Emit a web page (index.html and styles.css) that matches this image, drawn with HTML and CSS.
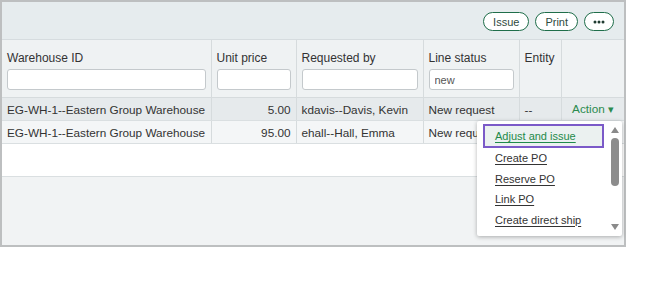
FILE: index.html
```html
<!DOCTYPE html>
<html>
<head>
  <meta charset="utf-8">
  <title>Requests</title>
<link rel="stylesheet" href="styles.css">
</head>
<body>
  <div class="frame">
    <div class="toolbar">
      <button class="pill">Issue</button>
      <button class="pill">Print</button>
      <button class="pill more" aria-label="More">
        <svg width="12" height="4" viewBox="0 0 12 4"><circle cx="2" cy="2" r="1.5"/><circle cx="6" cy="2" r="1.5"/><circle cx="10" cy="2" r="1.5"/></svg>
      </button>
    </div>
    <table class="grid">
      <colgroup>
        <col class="c-wh"><col class="c-price"><col class="c-req"><col class="c-status"><col class="c-entity"><col class="c-act">
      </colgroup>
      <thead>
        <tr>
          <th><div class="label">Warehouse ID</div><input class="filter"></th>
          <th><div class="label">Unit price</div><input class="filter"></th>
          <th><div class="label">Requested by</div><input class="filter"></th>
          <th><div class="label">Line status</div><input class="filter" value="new"></th>
          <th><div class="label">Entity</div></th>
          <th></th>
        </tr>
      </thead>
      <tbody>
        <tr class="sel">
          <td>EG-WH-1--Eastern Group Warehouse</td>
          <td class="num">5.00</td>
          <td>kdavis--Davis, Kevin</td>
          <td>New request</td>
          <td>--</td>
          <td class="act">Action <span class="caret">&#9662;</span></td>
        </tr>
        <tr>
          <td>EG-WH-1--Eastern Group Warehouse</td>
          <td class="num">95.00</td>
          <td>ehall--Hall, Emma</td>
          <td>New request</td>
          <td></td>
          <td></td>
        </tr>
      </tbody>
    </table>
    <div class="empty"></div>
    <div class="footer"></div>

    <div class="menu">
      <ul class="items">
        <li class="focus"><a href="#">Adjust and issue</a></li>
        <li><a href="#">Create PO</a></li>
        <li><a href="#">Reserve PO</a></li>
        <li><a href="#">Link PO</a></li>
        <li><a href="#">Create direct ship</a></li>
        <li><a href="#">Drop ship</a></li>
      </ul>
      <div class="scroll">
        <span class="arrow up"></span>
        <span class="thumb"></span>
        <span class="arrow down"></span>
      </div>
    </div>
  </div>
</body>
</html>
```

FILE: styles.css
```css
body {
  margin: 0;
  background: #fff;
  font-family: "Liberation Sans", Arial, sans-serif;
  font-size: 11.75px;
  color: #333;
}

.frame {
  position: relative;
  width: 622px;
  height: 243px;
  border: 2px solid #bdbfc0;
  display: flex;
  flex-direction: column;
  background: #f1f3f4;
}

.toolbar {
  height: 38px;
  flex: none;
  display: flex;
  justify-content: flex-end;
  align-items: center;
  gap: 6px;
  padding: 2px 10px 0 0;
  background: #e6ecee;
  border-bottom: 1px solid #d6dcdf;
  box-sizing: border-box;
}

.pill {
  height: 19px;
  padding: 0 9px;
  border: 1.5px solid #1f6e4a;
  border-radius: 10px;
  background: #fff;
  font-family: inherit;
  font-size: 11px;
  color: #2f4a40;
}

.more {
  width: 30px;
  padding: 0;
  display: flex;
  align-items: center;
  justify-content: center;
}

.more svg { fill: #1f3b30; }

.grid {
  border-collapse: collapse;
  table-layout: fixed;
  width: 622px;
  flex: none;
}

.c-wh { width: 209px; }
.c-price { width: 85px; }
.c-req { width: 127px; }
.c-status { width: 96px; }
.c-entity { width: 42px; }
.c-act { width: 63px; }

th {
  height: 57px;
  padding: 0 5px;
  text-align: left;
  vertical-align: top;
  font-weight: normal;
  font-size: 12px;
  background: #eff2f3;
  border-right: 1px solid #d6dbdd;
}

th:last-child { border-right: none; }

.label {
  margin-top: 11px;
  height: 18px;
  color: #333;
}

.filter {
  display: block;
  box-sizing: border-box;
  width: 100%;
  height: 21px;
  margin: 0;
  padding: 0 5px;
  border: 1px solid #c4c9cc;
  border-radius: 3px;
  background: #fff;
  font-family: inherit;
  font-size: 11px;
  color: #555;
}

td {
  height: 22px;
  padding: 0 5px;
  border-right: 1px solid #d6dbdd;
  border-bottom: 1px solid #dadfe1;
  white-space: nowrap;
  overflow: hidden;
  background: #f4f6f7;
}

td:last-child { border-right: none; }

tr.sel td { background: #e6eaec; border-top: 1px solid #d6dbdd; }

.num { text-align: right; }

.act {
  text-align: right;
  color: #2b8a4e;
  padding-right: 10px;
}

.caret { font-size: 11px; }

.empty {
  height: 32px;
  flex: none;
  background: #fff;
  border-bottom: 1px solid #dadfe1;
}

.footer {
  flex: 1;
  background: #f1f3f4;
}

.menu {
  position: absolute;
  left: 475px;
  top: 119px;
  width: 145px;
  height: 115px;
  background: #fff;
  box-shadow: 0 1px 4px rgba(0, 0, 0, 0.3);
  border-radius: 2px;
  overflow: hidden;
  display: flex;
}

.items {
  list-style: none;
  margin: 0;
  padding: 3px 0 0 6px;
  flex: 1;
  font-size: 11px;
}

.items li {
  height: 20.5px;
  line-height: 20px;
  padding-left: 12px;
}

.items a {
  color: #333;
  text-decoration: underline;
  text-underline-offset: 2px;
}

.items li.focus {
  height: 20px;
  line-height: 20px;
  border: 2px solid #7b5ac8;
  background: #ebf1f0;
  margin-right: 4px;
  padding-left: 10px;
}

.items li.focus a { color: #1f8a4a; }

.scroll {
  width: 14px;
  display: flex;
  flex-direction: column;
  align-items: center;
  padding: 6px 0 4px;
}

.arrow {
  width: 0;
  height: 0;
  border-left: 4px solid transparent;
  border-right: 4px solid transparent;
}

.up { border-bottom: 6px solid #8a8a8a; }
.down { border-top: 6px solid #8a8a8a; margin-top: auto; margin-bottom: 2px; }

.thumb {
  width: 8px;
  height: 48px;
  margin-top: 5px;
  border-radius: 4px;
  background: #8c8c8c;
}
```
